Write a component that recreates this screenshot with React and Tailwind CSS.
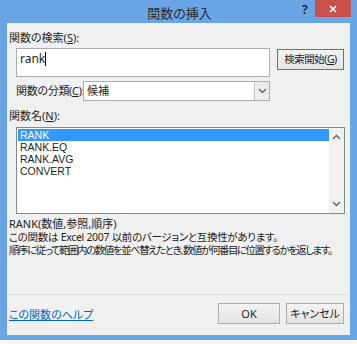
import React from 'react';

function Chevron({ up }) {
    return (
        <svg width="9" height="6" viewBox="0 0 9 6" className="text-[#606060]">
            <path d={up ? "M1 5 L4.5 1.5 L8 5" : "M1 1 L4.5 4.5 L8 1"} fill="none" stroke="currentColor" strokeWidth="1.3" />
        </svg>
    );
}

export default function App() {
    const items = ['RANK', 'RANK.EQ', 'RANK.AVG', 'CONVERT'];
    const btn = "h-[21px] bg-gradient-to-b from-[#f3f3f3] to-[#e4e4e4] text-[11px] leading-none text-[#1e1e1e] whitespace-nowrap";

    return (
        <div className="w-[357px] h-[344px] bg-[#f7f7f7] overflow-hidden text-[#1e1e1e] font-['Noto_Sans','Noto_Sans_CJK_JP',sans-serif] [font-feature-settings:'palt']">
            <div className="h-[340px] bg-[#6aa5e6] flex flex-col px-[7px] pb-[5px]">
                {/* title bar */}
                <div className="h-[23px] relative flex items-center justify-center">
                    <span className="text-[13px] text-[#2b2b2b] leading-none mt-[4px] ml-[2px]">関数の挿入</span>
                    <span className="absolute left-[295px] top-[1px] text-[12px] font-bold text-[#1e2f4a]">?</span>
                    <div className="absolute left-[308px] top-0 w-[36px] h-[17px] bg-[#c9504b] flex items-center justify-center">
                        <svg width="8" height="8" viewBox="0 0 8 8">
                            <path d="M1 1 L7 7 M7 1 L1 7" stroke="#fff" strokeWidth="1.6" />
                        </svg>
                    </div>
                </div>

                {/* content */}
                <div className="flex-1 bg-[#f0f0f0] flex flex-col text-[11px] leading-[14px] whitespace-nowrap">
                    <div className="ml-[2px] mt-[8px]">関数の検索(<span className="underline">S</span>):</div>

                    <div className="flex items-start mt-[3px]">
                        <div className="ml-[9px] w-[254px] h-[29px] bg-white border border-[#abadb3] px-[3px] pt-[2px] flex items-start">
                            <span className="text-[12px] leading-[16px]">rank</span>
                            <span className="w-px h-[14px] bg-black mt-[1px]"></span>
                        </div>
                        <button className={`ml-[7px] mt-[1px] w-[67px] border border-[#3c7fb1] !text-[10.5px] tracking-[-0.5px] ${btn}`}>
                            検索開始(<span className="underline">G</span>)
                        </button>
                    </div>

                    <div className="flex items-center mt-[4px] h-[20px]">
                        <div className="ml-[9px] w-[67px] tracking-[-0.3px]">関数の分類(<span className="underline">C</span>):</div>
                        <div className="w-[187px] h-[20px] bg-white border border-[#abadb3] flex items-center">
                            <span className="flex-1 pl-[3px]">候補</span>
                            <div className="w-[15px] h-[18px] border-l border-[#c8c8c8] bg-[#ececec] flex items-center justify-center">
                                <Chevron />
                            </div>
                        </div>
                    </div>

                    <div className="ml-[2px] mt-[8px]">関数名(<span className="underline">N</span>):</div>

                    <div className="ml-[9px] mt-[4px] w-[329px] h-[87px] bg-white border border-[#828790] flex">
                        <div className="flex-1 pt-px pl-px flex flex-col font-['Liberation_Sans',sans-serif]">
                            {items.map((it, i) => (
                                <div key={it} className={`h-[12px] pl-[2px] text-[10.5px] leading-[12px] ${i === 0 ? 'bg-[#3399ff] text-white' : ''}`}>{it}</div>
                            ))}
                        </div>
                        <div className="w-[15px] bg-[#f0f0f0] flex flex-col items-center justify-between py-[6px]">
                            <Chevron up />
                            <Chevron />
                        </div>
                    </div>

                    <div className="ml-[2px] mt-[3px] leading-[13px]">RANK(数値,参照,順序)</div>
                    <div className="ml-[2px] mt-px leading-[13px] text-[10.5px] tracking-[-0.3px]">この関数は Excel 2007 以前のバージョンと互換性があります。</div>
                    <div className="ml-[2px] leading-[13px] text-[10.5px] tracking-[-1.5px]">順序に従って範囲内の数値を並べ替えたとき、数値が何番目に位置するかを返します。</div>

                    <div className="mt-[37px] h-px bg-[#dcdcdc] mx-[1px]"></div>

                    <div className="flex items-center mt-[8px]">
                        <a className="ml-[2px] text-[#0066cc] underline mt-[3px]">この関数のヘルプ</a>
                        <div className="flex-1"></div>
                        <button className={`w-[62px] border border-[#acacac] ${btn}`}>OK</button>
                        <button className={`ml-[6px] mr-[6px] w-[58px] border border-[#acacac] ${btn}`}>キャンセル</button>
                    </div>
                </div>
            </div>
        </div>
    );
}
